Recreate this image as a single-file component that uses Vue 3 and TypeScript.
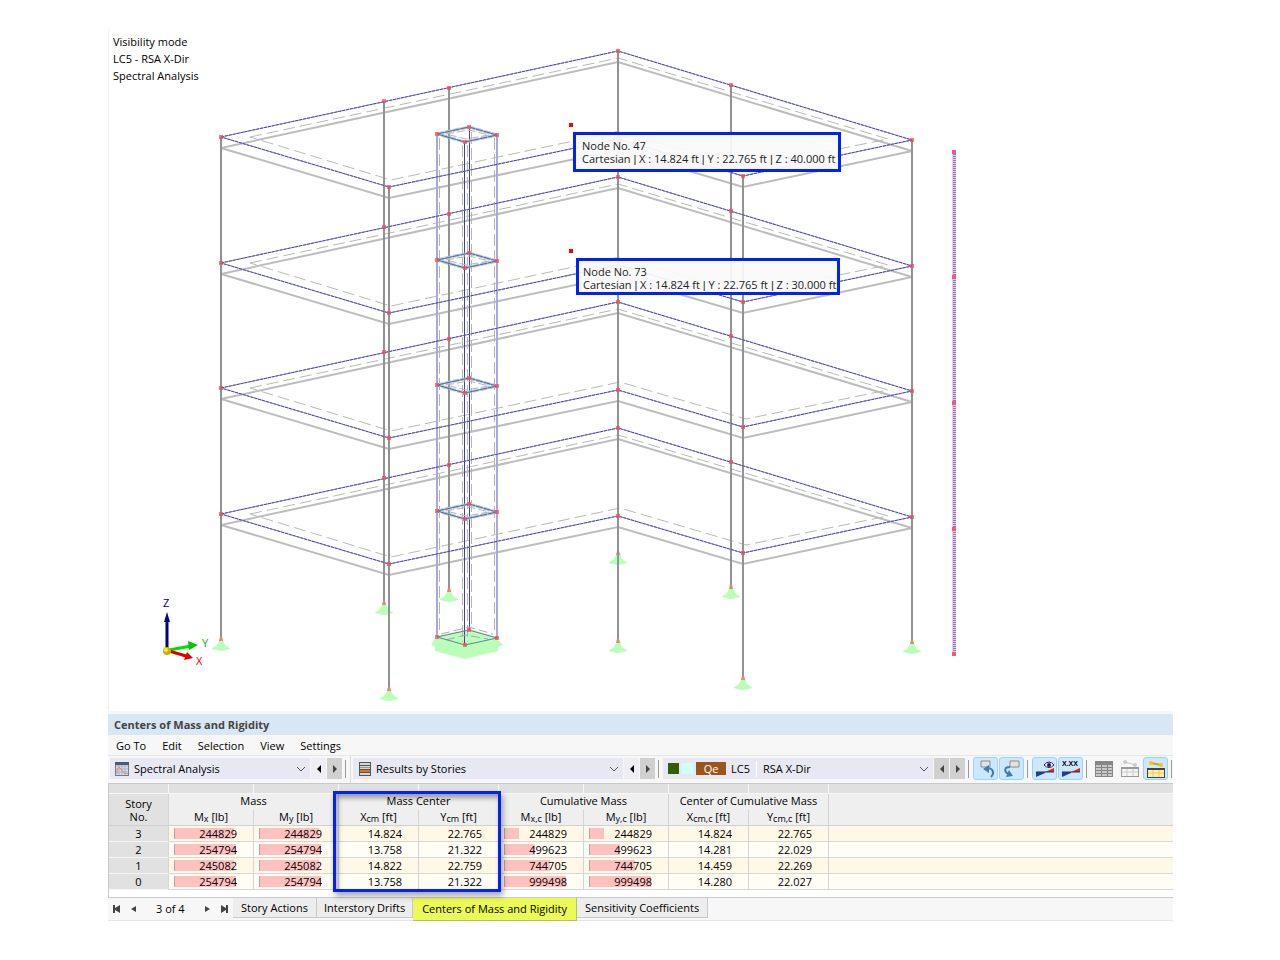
<script setup lang="ts">
import { ref } from 'vue'

type Point = [number, number]

const levels = [0, 126, 251, 377]

const slab: Point[] = [[221, 137], [618, 51], [912, 140], [743, 176], [618, 139], [389, 187]]
const slabInset: Point[] = [[250, 137], [618, 58], [888, 139], [746, 168], [620, 131], [391, 180]]
const floorNodes: Point[] = [...slab, [384, 101], [449, 88], [731, 85]]
const columns: Point[] = [[384, 101], [449, 88], [618, 51], [731, 85], [221, 137], [912, 140], [743, 176], [618, 139], [389, 187]]
const shaft: Point[] = [[437, 134], [469, 127], [497, 135], [465, 142]]
const shaftInset: Point[] = [[446, 134], [469, 130], [489, 135], [466, 139]]
const massNodes: Point[] = [[571, 125], [571, 251]]
const storyMarks = [152, 277, 403, 529, 654]

const toPoints = (pts: Point[], dy: number): string => pts.map(([x, y]) => `${x},${y + dy}`).join(' ')
const supportPath = (x: number, y: number): string =>
  `M${x - 1} ${y}h3l1 5 2 3 4 2v1l-4 1-4 1h-2l-4-1-4-1v-1l4-2 2-3z`

const tips = [
  { node: 47, z: '40.000', cls: 'tip-a' },
  { node: 73, z: '30.000', cls: 'tip-b' },
]

const menus = ['Go To', 'Edit', 'Selection', 'View', 'Settings']
const tabs = ['Story Actions', 'Interstory Drifts', 'Centers of Mass and Rigidity', 'Sensitivity Coefficients']
const activeTab = ref(2)

interface Column { name: string; sub: string; unit: string }
const cols: Column[] = [
  { name: 'M', sub: 'x', unit: 'lb' },
  { name: 'M', sub: 'y', unit: 'lb' },
  { name: 'X', sub: 'cm', unit: 'ft' },
  { name: 'Y', sub: 'cm', unit: 'ft' },
  { name: 'M', sub: 'x,c', unit: 'lb' },
  { name: 'M', sub: 'y,c', unit: 'lb' },
  { name: 'X', sub: 'cm,c', unit: 'ft' },
  { name: 'Y', sub: 'cm,c', unit: 'ft' },
]
const groups = ['Mass', 'Mass Center', 'Cumulative Mass', 'Center of Cumulative Mass']

interface Row { story: number; values: string[] }
const rows: Row[] = [
  { story: 3, values: ['244829', '244829', '14.824', '22.765', '244829', '244829', '14.824', '22.765'] },
  { story: 2, values: ['254794', '254794', '13.758', '21.322', '499623', '499623', '14.281', '22.029'] },
  { story: 1, values: ['245082', '245082', '14.822', '22.759', '744705', '744705', '14.459', '22.269'] },
  { story: 0, values: ['254794', '254794', '13.758', '21.322', '999498', '999498', '14.280', '22.027'] },
]
const hasBar = (c: number): boolean => cols[c].unit === 'lb'
const barWidth = (r: Row, c: number): string => {
  const max = Math.max(...rows.map((row) => Number(row.values[c])))
  return `${Math.round((Number(r.values[c]) / max) * 62)}px`
}
</script>

<template>
  <main class="page">
    <section class="viewport" aria-label="Model view">
      <svg class="model" viewBox="108 28 1065 682" role="img" aria-label="Structural model">
        <g v-for="dy in levels" :key="'slab' + dy" fill="none">
          <polygon :points="toPoints(slab, dy + 11)" stroke="#bdbdbd" stroke-width="2" />
          <polygon :points="toPoints(slabInset, dy)" stroke="#b9b9b9" stroke-width="1" stroke-dasharray="12 5" />
        </g>
        <path v-for="[x, y] in columns" :key="'s' + x + y" :d="supportPath(x, y + 501)" fill="#b9ffb9" />
        <g v-for="[x, y] in columns" :key="'c' + x + y">
          <line :x1="x" :x2="x" :y1="y" :y2="y + 502" stroke="#929292" stroke-width="2" />
          <path :d="`M${x - 1} ${y + 500}h2l1 4h-4z`" fill="#f08078" />
        </g>

        <path d="M435 638l2-2 32-7 28 8 2 4 4 4-5 2v4l-33 8-30-8v-4l-4-2z" fill="#b9ffb9" />
        <g fill="none">
          <path d="M437 134V637M497 135V638" stroke="#aaa8dc" stroke-width="2" />
          <path d="M439.500 138V634M494.500 138V634M462.500 145V642M467.500 145V642M471.500 132V628" stroke="#b4b4b4" stroke-dasharray="12 4" />
          <path d="M464.500 142V645M469.500 127V630" stroke="#403ca8" stroke-width="1" />
          <path d="M441 634L469 627L493 634M446 640L465 635L488 639" stroke="#aaa" stroke-dasharray="9 4" />
          <polygon :points="toPoints(shaft, 503)" stroke="#6e78a8" stroke-width="1" />
        </g>
        <g v-for="dy in levels" :key="'f' + dy" fill="none">
          <polygon :points="toPoints(slab, dy)" stroke="#9a98d6" stroke-width="1" />
          <polygon :points="toPoints(slab, dy)" stroke="#4a46ac" stroke-width="1" stroke-dasharray="3 1" />
          <polygon :points="toPoints(shaft, dy)" stroke="#a9cdd0" stroke-width="3" stroke-dasharray="7 1" />
          <polygon :points="toPoints(shaft, dy)" stroke="#625eaf" stroke-width="1" />
          <polygon :points="toPoints(shaftInset, dy)" stroke="#b4b4b4" stroke-dasharray="8 3" />
        </g>
        <g fill="#f25050" fill-opacity="0.75">
          <template v-for="dy in levels" :key="'n' + dy">
            <rect v-for="[x, y] in floorNodes" :key="'n' + x + y" :x="x - 2" :y="y + dy - 2" width="4" height="4" />
            <rect v-for="[x, y] in shaft" :key="'h' + x + y" :x="x - 2" :y="y + dy - 2" width="4" height="4" />
          </template>
          <rect v-for="[x, y] in shaft" :key="'b' + x" :x="x - 2" :y="y + 501" width="4" height="4" />
        </g>

        <line x1="954" x2="954" y1="152" y2="654" stroke="#ecc8ec" stroke-width="4" />
        <line x1="954.500" x2="954.500" y1="152" y2="654" stroke="#8a78b8" stroke-width="3" stroke-dasharray="1 1" />
        <rect v-for="y in storyMarks" :key="y" x="952" :y="y - 2" width="4" height="4" fill="#f2587c" />
        <rect v-for="[x, y] in massNodes" :key="'m' + y" :x="x - 2" :y="y - 2" width="4" height="4" fill="#f00" />

        <path d="M167 650V621" stroke="#00007c" stroke-width="3" />
        <path d="M167 612l3 10h-6z" fill="#0000a8" />
        <path d="M169 650l22-4" stroke="#00e000" stroke-width="3" />
        <path d="M188 641l10 4-9 5z" fill="#00c800" />
        <path d="M169 651l17 5" stroke="#e00000" stroke-width="3" />
        <path d="M187 652l6 6-9 2z" fill="#e00000" />
        <circle cx="167" cy="651" r="4" fill="#c8b400" />
        <circle cx="166" cy="650" r="2" fill="#ffef3a" />
        <g class="axis">
          <text x="163" y="607" fill="#00008b">Z</text>
          <text x="202" y="647" fill="#00b400">Y</text>
          <text x="196" y="665" fill="#f00000">X</text>
        </g>
      </svg>

      <p class="mode">Visibility mode<br />LC5 - RSA X-Dir<br />Spectral Analysis</p>
      <div v-for="t in tips" :key="t.node" class="tip" :class="t.cls">
        Node No. {{ t.node }}<br />Cartesian <span class="pipe">|</span> X : 14.824 ft <span class="pipe">|</span> Y : 22.765 ft <span class="pipe">|</span> Z : {{ t.z }} ft
      </div>
    </section>

    <section class="panel">
      <h1 class="title">Centers of Mass and Rigidity</h1>
      <nav class="menu">
        <button v-for="m in menus" :key="m" type="button">{{ m }}</button>
      </nav>

      <div class="toolbar">
        <div class="combo narrow">
          <svg width="14" height="14" viewBox="0 0 14 14" aria-hidden="true">
            <rect width="14" height="14" fill="#747b8c" />
            <rect x="1" y="1" width="12" height="12" fill="#d7dcec" />
            <path d="M1 4h12M1 7h12M1 10h12M4 3v10M7 3v10M10 3v10" stroke="#a9b2c8" />
            <path d="M0 0h14v3H0z" fill="#4c5874" />
            <path d="M2 12V8l2-3 2 2 3 4 4 1" fill="none" stroke="#ef8a55" />
          </svg>
          <select aria-label="Analysis type"><option>Spectral Analysis</option></select>
          <svg class="chev" width="10" height="6" viewBox="0 0 10 6" aria-hidden="true"><path d="M1 1l4 4 4-4" /></svg>
        </div>
        <button type="button" class="step light" aria-label="Previous analysis"><svg width="4" height="8" viewBox="0 0 4 8"><path d="M4 0v8L0 4z" /></svg></button>
        <button type="button" class="step" aria-label="Next analysis"><svg width="4" height="8" viewBox="0 0 4 8"><path d="M0 0v8l4-4z" /></svg></button>
        <i class="sep"></i><i class="edge"></i>

        <div class="combo">
          <svg width="12" height="14" viewBox="0 0 12 14" aria-hidden="true">
            <path d="M0 0h12v14H0z" fill="#555" />
            <path d="M1 1h10v2H1zM1 4h10v3H1zM1 11h10v2H1z" fill="#d4d4d8" />
            <path d="M1 5h10v1H1z" fill="#999" />
            <path d="M1 8h10v2H1z" fill="#f26a13" />
          </svg>
          <select aria-label="Result table"><option>Results by Stories</option></select>
          <svg class="chev" width="10" height="6" viewBox="0 0 10 6" aria-hidden="true"><path d="M1 1l4 4 4-4" /></svg>
        </div>
        <button type="button" class="step light" aria-label="Previous table"><svg width="4" height="8" viewBox="0 0 4 8"><path d="M4 0v8L0 4z" /></svg></button>
        <button type="button" class="step" aria-label="Next table"><svg width="4" height="8" viewBox="0 0 4 8"><path d="M0 0v8l4-4z" /></svg></button>
        <i class="sep before-combo"></i>

        <div class="combo">
          <i class="swatch green"></i><i class="swatch cyan"></i>
          <span class="badge">Qe</span><span class="lc">LC5</span>
          <select aria-label="Load case"><option>RSA X-Dir</option></select>
          <svg class="chev" width="10" height="6" viewBox="0 0 10 6" aria-hidden="true"><path d="M1 1l4 4 4-4" /></svg>
        </div>
        <button type="button" class="step" aria-label="Previous load case"><svg width="4" height="8" viewBox="0 0 4 8"><path d="M4 0v8L0 4z" /></svg></button>
        <button type="button" class="step" aria-label="Next load case"><svg width="4" height="8" viewBox="0 0 4 8"><path d="M0 0v8l4-4z" /></svg></button>
        <i class="sep before-combo"></i>

        <button type="button" class="tool on" aria-label="Select from model">
          <svg width="20" height="18" viewBox="0 0 20 18"><path d="M5 1h9v6H5z" fill="#e3e3e3" stroke="#8b8b8b" /><path d="M11 8c6 0 8 5 4 9" fill="none" stroke="#3d7db5" stroke-width="2" /><path d="M7 9l6-4v8z" fill="#3d7db5" /></svg>
        </button>
        <button type="button" class="tool on" aria-label="Select in model">
          <svg width="20" height="18" viewBox="0 0 20 18"><path d="M8 1h9v6H8z" fill="#e3e3e3" stroke="#8b8b8b" /><path d="M8 7C2 7 2 11 6 14" fill="none" stroke="#3d7db5" stroke-width="2" /><path d="M4 17l7-1-4-6z" fill="#3d7db5" /></svg>
        </button>
        <i class="sep group"></i>
        <button type="button" class="tool on" aria-label="Show results">
          <svg width="20" height="18" viewBox="0 0 20 18"><path d="M1 12v5l9-4v-1z" fill="#1c3cae" /><path d="M10 12h9V8z" fill="#d42a1c" /><path d="M1 12h18" stroke="#334" /><path d="M9 5q5-6 10 0q-5 5-10 0z" fill="#fff" stroke="#1a1a66" /><circle cx="14" cy="5" r="2" fill="#1a1a66" /></svg>
        </button>
        <button type="button" class="tool on" aria-label="Show values">
          <svg width="20" height="18" viewBox="0 0 20 18"><path d="M1 12v5l9-4v-1z" fill="#1c3cae" /><path d="M10 12h9V8z" fill="#d42a1c" /><path d="M1 12h18" stroke="#334" /><text x="1" y="6" class="xxx">X.XX</text></svg>
        </button>
        <i class="sep group"></i>
        <button type="button" class="tool" aria-label="Table layout">
          <svg width="20" height="18" viewBox="0 0 20 18"><path d="M1 1h18v16H1z" fill="#868686" /><path d="M2 5h5v2H2zM8 5h5v2H8zM14 5h4v2h-4zM2 8h5v2H2zM8 8h5v2H8zM14 8h4v2h-4zM2 11h5v2H2zM8 11h5v2H8zM14 11h4v2h-4zM2 14h5v2H2zM8 14h5v2H8zM14 14h4v2h-4z" fill="#c8c8c8" /></svg>
        </button>
        <button type="button" class="tool" aria-label="Member rows">
          <svg width="20" height="18" viewBox="0 0 20 18"><path d="M1 7h18v10H1z" fill="#999" /><path d="M2 9h16v7H2z" fill="#f4f4f4" /><path d="M2 12h16M7 9v7M13 9v7" stroke="#ccc" /><path d="M5 2l10 3" stroke="#c4c4c4" /><circle cx="5" cy="2" r="2" fill="#ccc" /><circle cx="15" cy="5" r="2" fill="#ccc" /></svg>
        </button>
        <button type="button" class="tool on" aria-label="Selected rows">
          <svg width="20" height="18" viewBox="0 0 20 18"><path d="M1 8h18v10H1z" fill="#444" /><path d="M2 10h16v7H2z" fill="#fff0a0" /><path d="M2 13h16M7 10v7M13 10v7" stroke="#d8cc88" /><path d="M5 3l10 2" stroke="#d9a400" stroke-width="2" /><circle cx="5" cy="3" r="2" fill="#f7c600" /><circle cx="15" cy="5" r="2" fill="#f7c600" /></svg>
        </button>
        <i class="sep group"></i>
      </div>

      <div class="sheet">
        <table>
          <colgroup>
            <col class="c-story" />
            <col v-for="(c, i) in cols" :key="i" :class="c.unit === 'lb' ? 'c-mass' : 'c-dist'" />
            <col />
          </colgroup>
          <thead>
            <tr class="strip"><td v-for="n in 10" :key="n"></td></tr>
            <tr class="groups">
              <th rowspan="2" class="story">Story<br />No.</th>
              <th v-for="g in groups" :key="g" colspan="2" scope="colgroup">{{ g }}</th>
              <td class="rest"></td>
            </tr>
            <tr class="units">
              <th v-for="(c, i) in cols" :key="i" scope="col">{{ c.name }}<span class="sub">{{ c.sub }}</span> [{{ c.unit }}]</th>
              <td class="rest"></td>
            </tr>
          </thead>
          <tbody>
            <tr v-for="r in rows" :key="r.story">
              <th scope="row">{{ r.story }}</th>
              <td v-for="(v, c) in r.values" :key="c">
                <div class="cell">
                  <span v-if="hasBar(c)" class="bar" :style="{ width: barWidth(r, c) }"></span>
                  <span class="num">{{ v }}</span>
                </div>
              </td>
              <td></td>
            </tr>
          </tbody>
        </table>
        <div class="marker"></div>
      </div>

      <footer class="foot">
        <div class="pager">
          <button type="button" aria-label="First"><svg width="8" height="8" viewBox="0 0 8 8"><path d="M0 0h2v3l5-3v8L2 5v3H0z" /></svg></button>
          <button type="button" aria-label="Previous"><svg width="8" height="8" viewBox="0 0 8 8"><path d="M6 1v6L1 4z" /></svg></button>
          <span>3 of 4</span>
          <button type="button" aria-label="Next"><svg width="8" height="8" viewBox="0 0 8 8"><path d="M2 1v6l5-3z" /></svg></button>
          <button type="button" aria-label="Last"><svg width="8" height="8" viewBox="0 0 8 8"><path d="M8 0H6v3L1 0v8l5-3v3h2z" /></svg></button>
        </div>
        <button v-for="(t, i) in tabs" :key="t" type="button" class="tab" :class="{ active: activeTab === i }" @click="activeTab = i">{{ t }}</button>
      </footer>
    </section>
  </main>
</template>

<style>
body { background: #fff; }
</style>

<style scoped>
* { box-sizing: border-box; }
.page {
  padding: 28px 107px 38px 108px;
  font-family: "Open Sans", "Noto Sans", sans-serif;
  font-size: 11px;
  line-height: 16px;
  color: #000;
}
button, select { font: inherit; color: inherit; border: 0; margin: 0; padding: 0; background: none; }
.viewport { position: relative; box-shadow: inset 1px 0 #f2f2f2; margin-bottom: 1px; }
.model { display: block; width: 100%; height: auto; }
.axis { font-size: 11px; }
.mode { position: absolute; left: 5px; top: 5px; margin: 0; line-height: 17px; }
.tip {
  position: absolute;
  border: 3px solid #0022f5;
  background: rgba(250, 250, 251, 0.93);
  line-height: 13px;
  color: #222;
  white-space: nowrap;
  padding: 4px 4px 3px 6px;
}
.pipe { font-family: "Liberation Sans", sans-serif; }
.tip-a { left: 465px; top: 104px; width: 268px; height: 40px; }
.tip-b { left: 468px; top: 230px; width: 264px; height: 37px; padding-left: 4px; }

.panel { background: #f7f7f7; padding-top: 3px; }
.title { margin: 0; padding-left: 6px; height: 21px; line-height: 21px; font-size: 11px; font-weight: 700; color: #444; background: #d9e6f3; }
.menu { display: flex; gap: 16px; height: 21px; padding-left: 8px; padding-top: 1px; border-bottom: 1px solid #e6e6e6; }
.toolbar { display: flex; align-items: center; height: 27px; padding: 0 0 2px 2px; overflow: hidden; }
.combo { flex: 0 0 270px; display: flex; align-items: center; height: 21px; padding: 0 4px 0 6px; background: #e8e8f3; }
.combo.narrow { flex-basis: 200px; padding-left: 5px; }
.combo > svg { flex: none; }
.combo select { flex: 1; min-width: 0; height: 21px; padding-left: 5px; appearance: none; }
.chev path { fill: none; stroke: #555; }
.swatch { width: 11px; height: 11px; margin-right: 3px; margin-left: -1px; }
.green { background: #335f00; }
.cyan { background: #ccffff; margin-left: 0; }
.badge { width: 30px; height: 13px; line-height: 13px; text-align: center; color: #fff; background: #9a551c; }
.lc { width: 31px; padding-left: 5px; border-right: 1px solid #fff; }
.lc + select { padding-left: 6px; }
.step { flex: none; width: 15px; height: 21px; margin-left: 1px; display: flex; align-items: center; justify-content: center; background: #d0d0d0; }
.step svg { fill: #444; }
.step.light { background: #eeeef4; }
.step.light svg { fill: #000; }
.sep { flex: none; width: 1px; height: 18px; margin: 0 3px; background: #999; }
.edge { flex: none; align-self: flex-start; width: 1px; height: 27px; margin: 0 2px 0 1px; background: #dcdcdc; }
.sep.before-combo { margin-right: 4px; }
.sep.group { margin: 0 4px 0 2px; }
.tool { flex: none; width: 25px; height: 23px; margin-right: 1px; display: flex; align-items: center; justify-content: center; border: 1px solid transparent; border-radius: 3px; }
.tool.on { background: #cce8ff; border-color: #99d1ff; }
.xxx { font: bold 7px "Liberation Sans", sans-serif; }

.sheet { position: relative; border: 1px solid #c8c8cf; border-right: 0; background: #fff; padding-bottom: 7px; }
table { width: 100%; table-layout: fixed; border-collapse: separate; border-spacing: 0; }
.c-story { width: 60px; }
.c-mass { width: 85px; }
.c-dist { width: 80px; }
th, td { height: 16px; padding: 0; line-height: 15px; font-weight: normal; vertical-align: top; border-right: 1px solid #d4d4d4; border-bottom: 1px solid #d8d8d8; }
th:last-child, td:last-child { border-right: 0; }
thead th, thead .rest { background: #efefef; border-bottom: 0; }
.strip td { height: 10px; background: #e0e0e0; border-color: #f7f7f7; }
.groups th { line-height: 14px; }
thead th.story { background: #e1e1e1; line-height: 13px; vertical-align: middle; border-bottom: 1px solid #d0d0d0; }
.units th, .units .rest { line-height: 13px; border-bottom: 1px solid #d0d0d0; }
.sub { font-size: 9px; line-height: 1; vertical-align: -1px; }
tbody th { background: #e1e1e1; border-bottom-color: #f5f5f5; }
tbody td { background: #fffdf4; }
tbody tr:nth-child(odd) td { background: #fff8e7; }
.cell { position: relative; height: 15px; padding-right: 16px; text-align: right; }
.bar { position: absolute; left: 5px; top: 2px; height: 11px; background: #ffc0c0; border-left: 1px solid #aaa; }
.num { position: relative; }
.marker { position: absolute; left: 224px; top: 7px; width: 168px; height: 101px; border: 3px solid #0022f5; box-shadow: 2px 4px 6px rgba(0, 0, 0, 0.35), inset 2px 4px 5px rgba(0, 0, 0, 0.35); pointer-events: none; }

.foot { display: flex; align-items: flex-start; height: 23px; border-bottom: 1px solid #e6e6e6; }
.pager { display: flex; align-items: center; width: 125px; height: 22px; padding-left: 5px; }
.pager button { display: flex; width: 8px; margin-right: 9px; }
.pager svg { fill: #444; }
.pager span { flex: none; width: 56px; padding-left: 9px; }
.tab { height: 20px; padding: 0 8px; line-height: 19px; background: #ededed; border: 1px solid #c8c8cf; border-top: 0; border-left: 0; white-space: nowrap; }
.tab:nth-of-type(2) { padding: 0 7px; }
.tab.active { height: 23px; padding: 0 9px; line-height: 22px; background: #ebfa55; border-color: #b8bf70; }
</style>
